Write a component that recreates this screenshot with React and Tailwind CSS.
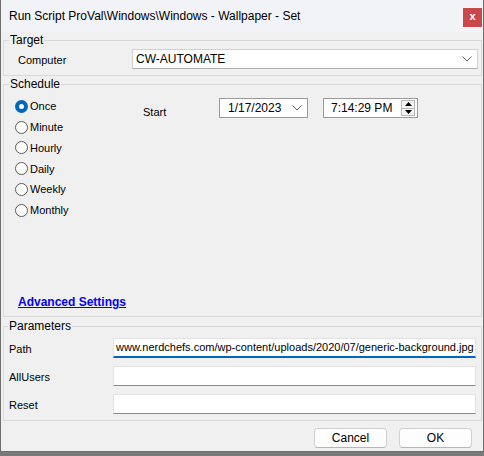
import React from 'react';

const font = { fontFamily: '"Liberation Sans", Arial, sans-serif' };

function Chevron() {
  return (
    <svg width="10" height="6" viewBox="0 0 10 6" className="shrink-0">
      <polyline points="0.5,0.5 5,5 9.5,0.5" fill="none" stroke="#606060" strokeWidth="1" />
    </svg>
  );
}

function Radio({ label, checked }) {
  return (
    <div className="flex items-center h-[20.8px]">
      {checked ? (
        <div className="w-[13px] h-[13px] rounded-full bg-[#0067c0] flex items-center justify-center">
          <div className="w-[5px] h-[5px] rounded-full bg-white" />
        </div>
      ) : (
        <div className="w-[13px] h-[13px] rounded-full border border-[#5a5a5a] bg-white" />
      )}
      <span className="ml-[2px] text-[11px] text-black">{label}</span>
    </div>
  );
}

function Field({ label, focused, value }) {
  return (
    <div className="flex items-center h-[20px]">
      <div className="w-[104px] shrink-0 pt-[2px] text-[11px] text-black">{label}</div>
      <div
        className={
          'flex-1 min-w-0 h-[20px] bg-white border border-[#e3e3e3] flex items-center overflow-hidden whitespace-nowrap pl-[2px] ' +
          (focused ? 'border-b-2 border-b-[#0067c0]' : 'border-b-[#8a8a8a]')
        }
      >
        {value && <span className="text-[11px] text-black">{value}</span>}
        {focused && <span className="w-px h-[14px] bg-black ml-[1px] shrink-0" />}
      </div>
    </div>
  );
}

export default function App() {
  return (
    <div className="w-[484px] h-[456px] flex flex-col bg-[#5c5c5c]" style={font}>
      <div className="flex-1 flex flex-col bg-[#f0f0f0] border-x border-b border-[#6e6e6e]">
        {/* title bar */}
        <div className="h-[32px] flex bg-[#f1f3f7] shrink-0">
          <div className="pl-[8px] pt-[7px] text-[12px] text-black">
            Run Script ProVal\Windows\Windows - Wallpaper - Set
          </div>
          <div className="ml-auto mr-[1px] mt-[8px] w-[19px] h-[19px] bg-[#c9484b] flex items-center justify-center text-white text-[11px] font-bold leading-none pb-[2px]">
            x
          </div>
        </div>

        {/* Target */}
        <fieldset className="ml-[2px] mr-[1px] border border-[#d9d9d9]">
          <legend className="ml-[5px] px-[1px] text-[12px] leading-[16px] text-black">Target</legend>
          <div className="flex items-center mt-[1px] mb-[6px]">
            <div className="w-[128px] pl-[14px] pt-[3px] text-[11px] text-black">Computer</div>
            <div className="flex-1 mr-[3px] h-[20px] bg-white border border-[#d0d0d0] border-b-[#b0b0b0] flex items-center pl-[3px] pr-[5px]">
              <span className="text-[12px] text-black">CW-AUTOMATE</span>
              <span className="ml-auto"><Chevron /></span>
            </div>
          </div>
        </fieldset>

        {/* Schedule */}
        <fieldset className="ml-[2px] mr-[1px] border border-[#d9d9d9]">
          <legend className="ml-[5px] px-[1px] text-[12px] leading-[16px] text-black">Schedule</legend>
          <div className="h-[224px] flex flex-col">
            <div className="flex">
              <div className="w-[139px] pl-[11px] pt-[4px] flex flex-col">
                <Radio label="Once" checked />
                <Radio label="Minute" />
                <Radio label="Hourly" />
                <Radio label="Daily" />
                <Radio label="Weekly" />
                <Radio label="Monthly" />
              </div>
              <div className="flex pt-[6px]">
                <div className="w-[76px] pt-[6px] text-[11px] text-black">Start</div>
                <div className="w-[89px] h-[20px] bg-white border border-[#9a9a9a] flex items-center pl-[8px] pr-[5px]">
                  <span className="text-[12px] text-black">1/17/2023</span>
                  <span className="ml-auto"><Chevron /></span>
                </div>
                <div className="ml-[15px] w-[95px] h-[20px] bg-white border border-[#9a9a9a] flex items-center pl-[7px] pr-[2px]">
                  <span className="text-[12px] text-black">7:14:29 PM</span>
                  <div className="ml-auto w-[14px] h-[16px] flex flex-col border border-[#b8b8b8] bg-[#f4f4f4]">
                    <div className="flex-1 flex items-center justify-center border-b border-[#b8b8b8]">
                      <svg width="7" height="4" viewBox="0 0 7 4"><polygon points="3.5,0 7,4 0,4" fill="#000" /></svg>
                    </div>
                    <div className="flex-1 flex items-center justify-center">
                      <svg width="7" height="4" viewBox="0 0 7 4"><polygon points="0,0 7,0 3.5,4" fill="#000" /></svg>
                    </div>
                  </div>
                </div>
              </div>
            </div>
            <div className="mt-auto mb-[6px] pl-[14px] h-[16px] flex items-center">
              <span className="text-[12px] font-bold text-[#0000ff] underline">Advanced Settings</span>
            </div>
          </div>
        </fieldset>

        {/* Parameters */}
        <fieldset className="mt-[1px] ml-[2px] mr-[1px] min-w-0 border border-[#d9d9d9]">
          <legend className="ml-[4px] px-[1px] text-[12px] leading-[16px] text-black">Parameters</legend>
          <div className="pt-[4px] pb-[6px] pl-[5px] pr-[5px] flex flex-col gap-[8px]">
            <Field label="Path" focused value="www.nerdchefs.com/wp-content/uploads/2020/07/generic-background.jpg" />
            <Field label="AllUsers" />
            <Field label="Reset" />
          </div>
        </fieldset>

        {/* buttons */}
        <div className="flex justify-end gap-[12px] pr-[11px] mt-[7px]">
          <div className="w-[73px] h-[20px] bg-[#fdfdfd] border border-[#d0d0d0] border-b-[#b5b5b5] rounded-[4px] flex items-center justify-center text-[12px] text-black">
            Cancel
          </div>
          <div className="w-[73px] h-[20px] bg-[#fdfdfd] border border-[#d0d0d0] border-b-[#b5b5b5] rounded-[4px] flex items-center justify-center text-[12px] text-black">
            OK
          </div>
        </div>
      </div>
      <div className="h-[4px] shrink-0 bg-[#7a7a7a]" />
    </div>
  );
}
